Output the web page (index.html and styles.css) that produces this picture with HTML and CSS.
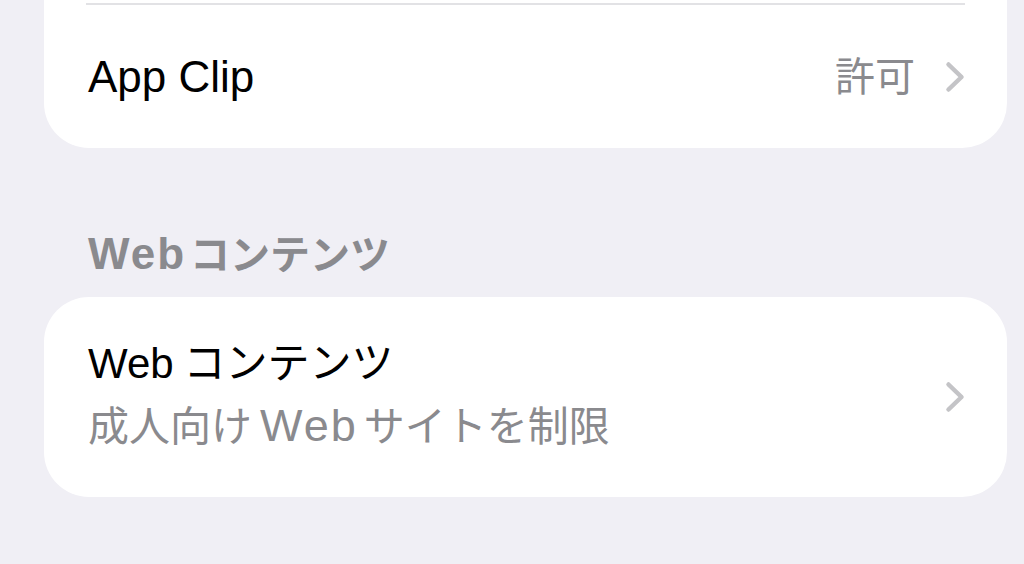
FILE: index.html
```html
<!DOCTYPE html>
<html>
<head>
  <title>スクリーンタイム</title>
  <link rel="stylesheet" href="styles.css">
</head>
<body>
  <div class="group group-first">
    <div class="separator"></div>
    <div class="row row-single">
      <span class="label">App Clip</span>
      <span class="value">許可</span>
      <svg class="chevron" viewBox="0 0 20 32" width="20" height="32">
        <path d="M3.5 3.5 L16.5 16 L3.5 28.5"/>
      </svg>
    </div>
  </div>

  <h2 class="section-title"><span class="latin">Web</span>コンテンツ</h2>

  <div class="group">
    <div class="row row-double">
      <div class="text">
        <div class="label"><span class="latin">Web</span>コンテンツ</div>
        <div class="subtitle">成人向け<span class="latin">Web</span>サイトを制限</div>
      </div>
      <svg class="chevron" viewBox="0 0 20 32" width="20" height="32">
        <path d="M3.5 3.5 L16.5 16 L3.5 28.5"/>
      </svg>
    </div>
  </div>
</body>
</html>
```

FILE: styles.css
```css
body {
  margin: 0;
  background-color: #f0eff5;
  font-family: "Liberation Sans", "Noto Sans CJK JP", sans-serif;
  color: #000;
}

.group {
  margin: 0 17px 0 44px;
  background-color: #fff;
  border-radius: 45px;
}

.group-first {
  border-radius: 0 0 45px 45px;
  padding-top: 3px;
}

.separator {
  height: 2px;
  margin: 0 42px;
  background-color: #e2e2e5;
}

.row {
  display: flex;
  align-items: center;
  padding: 0 42px 0 44px;
}

.row-single {
  height: 143px;
}

.row-double {
  height: 200px;
}

.label {
  font-size: 42px;
  line-height: 48px;
}

.row-single .label {
  flex: 1;
  font-size: 44px;
}

.value {
  font-size: 40px;
  line-height: 48px;
  color: #8a8a8e;
  margin-right: 30px;
}

.text {
  flex: 1;
}

.subtitle {
  margin-top: 10px;
  font-size: 41px;
  line-height: 56px;
  color: #8a8a8e;
}

.latin {
  margin-right: 10px;
}

.subtitle .latin {
  font-size: 45px;
  letter-spacing: 2px;
  margin: 0 6px 0 8px;
}

.chevron {
  display: block;
  fill: none;
  stroke: #c4c4c7;
  stroke-width: 4.5;
  stroke-linecap: round;
  stroke-linejoin: round;
}

.section-title {
  margin: 82px 0 18px 88px;
  font-size: 40px;
  line-height: 48px;
  font-weight: 600;
  color: #8a8a8e;
}

.section-title .latin {
  font-size: 44px;
  letter-spacing: 2px;
  margin-right: 4px;
}
```
